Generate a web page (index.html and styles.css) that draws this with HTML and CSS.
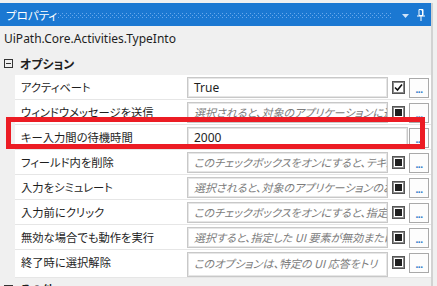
FILE: index.html
```html
<!DOCTYPE html>
<html lang="ja">
<head>
    <meta charset="UTF-8">
    <meta name="viewport" content="width=device-width, initial-scale=1.0">
    <title>プロパティ</title>
    <link rel="stylesheet" href="styles.css">
</head>
<body>
    <div class="panel">
        <div class="titlebar">
            <span class="title">プロパティ</span>
            <svg class="grip" width="334" height="5" viewBox="0 0 334 5">
                <defs>
                    <pattern id="dots" width="4" height="4" patternUnits="userSpaceOnUse">
                        <rect x="0" y="0" width="1" height="1" fill="#6aa9ec"/>
                        <rect x="2" y="2" width="1" height="1" fill="#6aa9ec"/>
                    </pattern>
                </defs>
                <rect width="334" height="5" fill="url(#dots)"/>
            </svg>
            <svg class="drop" width="7" height="4" viewBox="0 0 7 4">
                <path d="M0 0 H7 L3.5 4 Z" fill="#cfe3f8"/>
            </svg>
            <svg class="pin" width="8" height="12" viewBox="0 0 8 12">
                <path d="M2 0.5 H6 V6.5 H2 Z" fill="none" stroke="#ffffff" stroke-width="1"/>
                <path d="M4 1 H5.5 V6" fill="none" stroke="#ffffff" stroke-width="1"/>
                <path d="M0 7 H8" stroke="#ffffff" stroke-width="1"/>
                <path d="M4 7 V12" stroke="#ffffff" stroke-width="1"/>
            </svg>
        </div>
        <div class="type-name">UiPath.Core.Activities.TypeInto</div>
        <div class="category">
            <span class="toggle"></span>
            <span class="cat-label">オプション</span>
        </div>
        <div class="rows">
            <div class="row">
                <div class="gutter"></div>
                <div class="name">アクティベート</div>
                <div class="value">
                    <div class="textbox">True</div>
                    <span class="check checked">
                        <svg width="9" height="9" viewBox="0 0 9 9"><path d="M1 4.5 L3.5 7 L8 1.5" fill="none" stroke="#111" stroke-width="1.6"/></svg>
                    </span>
                    <span class="more">...</span>
                </div>
            </div>
            <div class="row">
                <div class="gutter"></div>
                <div class="name">ウィンドウメッセージを送信</div>
                <div class="value">
                    <div class="textbox hint">選択されると、対象のアプリケーションに送信されます。</div>
                    <span class="check"><span class="dot"></span></span>
                    <span class="more">...</span>
                </div>
            </div>
            <div class="row">
                <div class="gutter"></div>
                <div class="name">キー入力間の待機時間</div>
                <div class="value">
                    <div class="textbox">2000</div>
                    <span class="more tight">...</span>
                </div>
            </div>
            <div class="row">
                <div class="gutter"></div>
                <div class="name">フィールド内を削除</div>
                <div class="value">
                    <div class="textbox hint">このチェックボックスをオンにすると、テキストが削除されます。</div>
                    <span class="check"><span class="dot"></span></span>
                    <span class="more">...</span>
                </div>
            </div>
            <div class="row">
                <div class="gutter"></div>
                <div class="name">入力をシミュレート</div>
                <div class="value">
                    <div class="textbox hint">選択されると、対象のアプリケーションのお手本を使います。</div>
                    <span class="check"><span class="dot"></span></span>
                    <span class="more">...</span>
                </div>
            </div>
            <div class="row">
                <div class="gutter"></div>
                <div class="name">入力前にクリック</div>
                <div class="value">
                    <div class="textbox hint">このチェックボックスをオンにすると、指定した要素をクリックします。</div>
                    <span class="check"><span class="dot"></span></span>
                    <span class="more">...</span>
                </div>
            </div>
            <div class="row">
                <div class="gutter"></div>
                <div class="name">無効な場合でも動作を実行</div>
                <div class="value">
                    <div class="textbox hint">選択すると、指定した UI 要素が無効または非表示でも実行します。</div>
                    <span class="check"><span class="dot"></span></span>
                    <span class="more">...</span>
                </div>
            </div>
            <div class="row last">
                <div class="gutter"></div>
                <div class="name">終了時に選択解除</div>
                <div class="value">
                    <div class="textbox hint two">このオプションは、特定の UI 応答をトリガーする場合に使用されます。</div>
                    <span class="check"><span class="dot"></span></span>
                    <span class="more">...</span>
                </div>
            </div>
        </div>
        <div class="category">
            <span class="toggle"></span>
            <span class="cat-label">その他</span>
        </div>
    </div>
    <div class="highlight"></div>
</body>
</html>
```

FILE: styles.css
```css
/* Global */
body {
    margin: 0;
    height: 286px;
    background-color: #f0f0f0;
    font-family: "Noto Sans", "Noto Sans CJK JP", sans-serif;
    font-size: 12px;
    color: #1e1e1e;
    overflow: hidden;
}
.panel {
    width: 431px;
    margin-top: 3px;
    height: 283px;
    overflow: hidden;
    border-right: 2px solid #d2d2d2;
}
/* Title bar */
.titlebar {
    height: 23px;
    background-color: #1b78d2;
    display: flex;
    align-items: center;
    padding-left: 6px;
    color: #ffffff;
}
.title {
    font-family: "Noto Sans CJK JP", sans-serif;
    font-size: 11.5px;
    font-feature-settings: "palt";
    white-space: nowrap;
    width: 52px;
    flex-shrink: 0;
}
.grip {
    flex-shrink: 0;
    margin-top: 1px;
}
.drop {
    flex-shrink: 0;
    margin-left: 10px;
    margin-top: 2px;
}
.pin {
    flex-shrink: 0;
    margin-left: 8px;
}
/* Header */
.type-name {
    height: 26px;
    line-height: 26px;
    padding-left: 4px;
}
.category {
    height: 23px;
    display: flex;
    align-items: center;
    padding-left: 4px;
}
.toggle {
    width: 7px;
    height: 7px;
    border: 1px solid #333;
    position: relative;
    margin-right: 7px;
}
.toggle::after {
    content: "";
    position: absolute;
    left: 1px;
    top: 3px;
    width: 5px;
    height: 1px;
    background-color: #333;
}
.cat-label {
    font-family: "Noto Sans CJK JP", sans-serif;
    font-weight: bold;
    font-feature-settings: "palt";
}
/* Property rows */
.row {
    display: grid;
    grid-template-columns: 15px 172px 1fr;
    height: 25px;
}
.row.last {
    height: 28px;
}
.name {
    background-color: #ffffff;
    border-bottom: 1px solid #e6e6e6;
    padding-left: 6px;
    line-height: 24px;
    font-family: "Noto Sans CJK JP", sans-serif;
    font-size: 11.3px;
    font-feature-settings: "palt";
    white-space: nowrap;
    overflow: hidden;
}
.value {
    background-color: #ffffff;
    border-bottom: 1px solid #e6e6e6;
    display: flex;
    align-items: flex-start;
    min-width: 0;
    padding-top: 2px;
    padding-right: 2px;
}
.textbox {
    flex: 1;
    min-width: 0;
    height: 21px;
    box-sizing: border-box;
    border: 1px solid #c8c8c8;
    box-shadow: inset 0 0 0 1px #e6e6e6;
    padding-left: 6px;
    line-height: 19px;
    white-space: nowrap;
    overflow: hidden;
}
.textbox.hint {
    color: #7c7c7c;
    font-style: italic;
    font-family: "Noto Sans CJK JP", sans-serif;
    font-size: 11px;
    font-feature-settings: "palt";
}
.textbox.two {
    height: 25px;
    white-space: normal;
    line-height: 20px;
    word-break: break-all;
}
.check {
    flex-shrink: 0;
    width: 13px;
    height: 13px;
    box-sizing: border-box;
    border: 1px solid #555;
    box-shadow: inset 0 0 0 1px #8a8a8a;
    background-color: #fff;
    margin-left: 4px;
    margin-top: 4px;
    display: flex;
    align-items: center;
    justify-content: center;
}
.check .dot {
    width: 7px;
    height: 7px;
    background-color: #1e1e1e;
}
.more {
    flex-shrink: 0;
    width: 20px;
    height: 20px;
    box-sizing: border-box;
    border: 1px solid #a9a9a9;
    background-color: #fdfdfd;
    margin-left: 4px;
    margin-top: 1px;
    color: #2a78c8;
    font-weight: bold;
    font-size: 10px;
    line-height: 20px;
    text-align: center;
    letter-spacing: -0.5px;
}
.more.tight {
    margin-left: 1px;
}
/* Annotation */
.highlight {
    position: absolute;
    left: 6px;
    top: 117px;
    width: 419px;
    height: 32px;
    box-sizing: border-box;
    border: 5px solid #ec1c24;
}
```
